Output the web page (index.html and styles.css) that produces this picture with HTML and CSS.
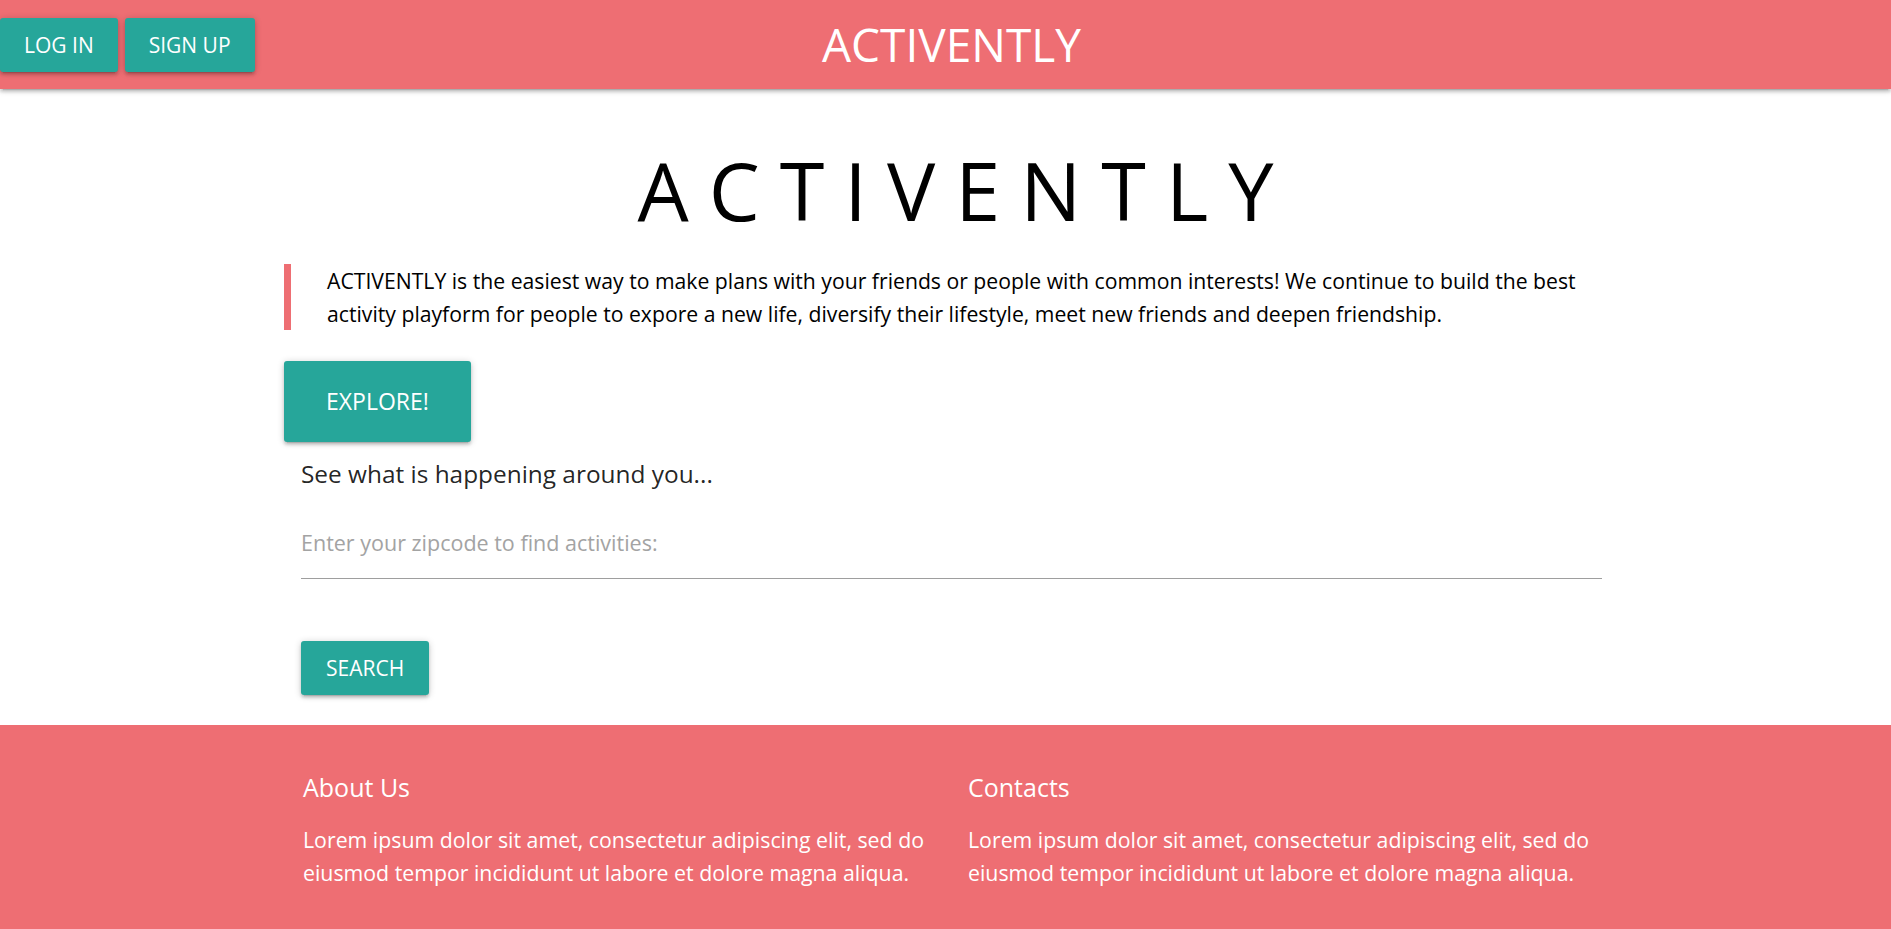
FILE: index.html
```html
<!DOCTYPE html>
<html lang="en">
<head>
<meta charset="utf-8">
<title>ACTIVENTLY</title>
<link rel="stylesheet" href="styles.css">
</head>
<body>
<header class="topnav">
  <div class="nav-left">
    <a class="btn" href="#">Log in</a>
    <a class="btn" href="#">Sign up</a>
  </div>
  <div class="brand">ACTIVENTLY</div>
  <div class="nav-right"></div>
</header>

<main class="container">
  <h1 class="hero-title">ACTIVENTLY</h1>
  <blockquote class="intro">ACTIVENTLY is the easiest way to make plans with your friends or people with common interests! We continue to build the best activity playform for people to expore a new life, diversify their lifestyle, meet new friends and deepen friendship.</blockquote>
  <a class="btn btn-large" href="#">Explore!</a>
  <section class="search">
    <p class="lead">See what is happening around you...</p>
    <div class="input-field">
      <input type="text" placeholder="Enter your zipcode to find activities:">
    </div>
    <button class="btn btn-search" type="button">Search</button>
  </section>
</main>

<footer class="page-footer">
  <div class="footer-row">
    <div class="footer-col">
      <h5 class="footer-title">About Us</h5>
      <p class="footer-text">Lorem ipsum dolor sit amet, consectetur adipiscing elit, sed do eiusmod tempor incididunt ut labore et dolore magna aliqua.</p>
    </div>
    <div class="footer-col">
      <h5 class="footer-title">Contacts</h5>
      <p class="footer-text">Lorem ipsum dolor sit amet, consectetur adipiscing elit, sed do eiusmod tempor incididunt ut labore et dolore magna aliqua.</p>
    </div>
  </div>
</footer>
</body>
</html>
```

FILE: styles.css
```css
* { box-sizing: border-box; }

html, body {
  margin: 0;
  padding: 0;
}

body {
  font-family: "Open Sans", "Noto Sans", "Liberation Sans", sans-serif;
  color: rgba(0, 0, 0, 0.87);
  background: #ffffff;
}

.btn {
  display: inline-block;
  background: #26a69a;
  color: #ffffff;
  text-decoration: none;
  text-transform: uppercase;
  font-family: inherit;
  font-size: 21px;
  height: 54px;
  line-height: 54px;
  padding: 0 24px;
  border: none;
  border-radius: 3px;
  box-shadow: 0 3px 3px 0 rgba(0,0,0,0.14), 0 4px 1px -3px rgba(0,0,0,0.12), 0 1px 7px 0 rgba(0,0,0,0.2);
  cursor: pointer;
}

/* Top navigation */
.topnav {
  height: 89px;
  background: #ee6e73;
  display: grid;
  grid-template-columns: 1fr auto 1fr;
  align-items: start;
  box-shadow: 0 3px 3px 0 rgba(0,0,0,0.14), 0 4px 1px -3px rgba(0,0,0,0.12), 0 1px 7px 0 rgba(0,0,0,0.2);
  position: relative;
  z-index: 2;
}

.nav-left {
  display: flex;
  gap: 7px;
  padding-top: 18px;
}

.brand {
  color: #ffffff;
  font-size: 46px;
  line-height: 89px;
  padding-left: 12px;
}

/* Main */
.container {
  width: 1323px;
  margin: 0 auto;
}

.hero-title {
  margin: 60px 0 0;
  font-weight: 400;
  font-size: 81px;
  line-height: 81px;
  letter-spacing: 20px;
  text-align: center;
  color: #000000;
  padding-left: 40px;
}

.intro {
  margin: 34px 0 0;
  border-left: 7px solid #ee6e73;
  padding-left: 36px;
  font-size: 21.2px;
  line-height: 33px;
  color: #000000;
}

.btn-large {
  margin-top: 31px;
  height: 81px;
  line-height: 81px;
  padding: 0 42px;
  font-size: 23px;
}

.search {
  padding: 0 5px 0 17px;
  display: flex;
  flex-direction: column;
  align-items: flex-start;
}

.lead {
  margin: 13px 0 0;
  font-size: 24.4px;
  line-height: 37.5px;
  color: rgba(0, 0, 0, 0.87);
}

.input-field {
  margin-top: 15px;
  width: 100%;
}

.input-field input {
  width: 100%;
  height: 71px;
  border: none;
  border-bottom: 1px solid #9e9e9e;
  font-family: inherit;
  font-size: 21.5px;
  padding: 0;
  outline: none;
  background: transparent;
  color: rgba(0,0,0,0.87);
}

.input-field input::placeholder {
  color: #a3a3a3;
}

.btn-search {
  margin-top: 62px;
  padding: 0 25px;
}

/* Footer */
.page-footer {
  margin-top: 30px;
  background: #ee6e73;
  color: #ffffff;
  padding: 47px 0 40px;
}

.footer-row {
  display: grid;
  grid-template-columns: 640px 640px;
  column-gap: 25px;
  margin-left: 303px;
}

.footer-title {
  margin: 0;
  font-size: 25px;
  font-weight: 400;
  line-height: 30px;
}

.footer-text {
  margin: 21px 0 0;
  font-size: 21.3px;
  line-height: 33px;
}
```
